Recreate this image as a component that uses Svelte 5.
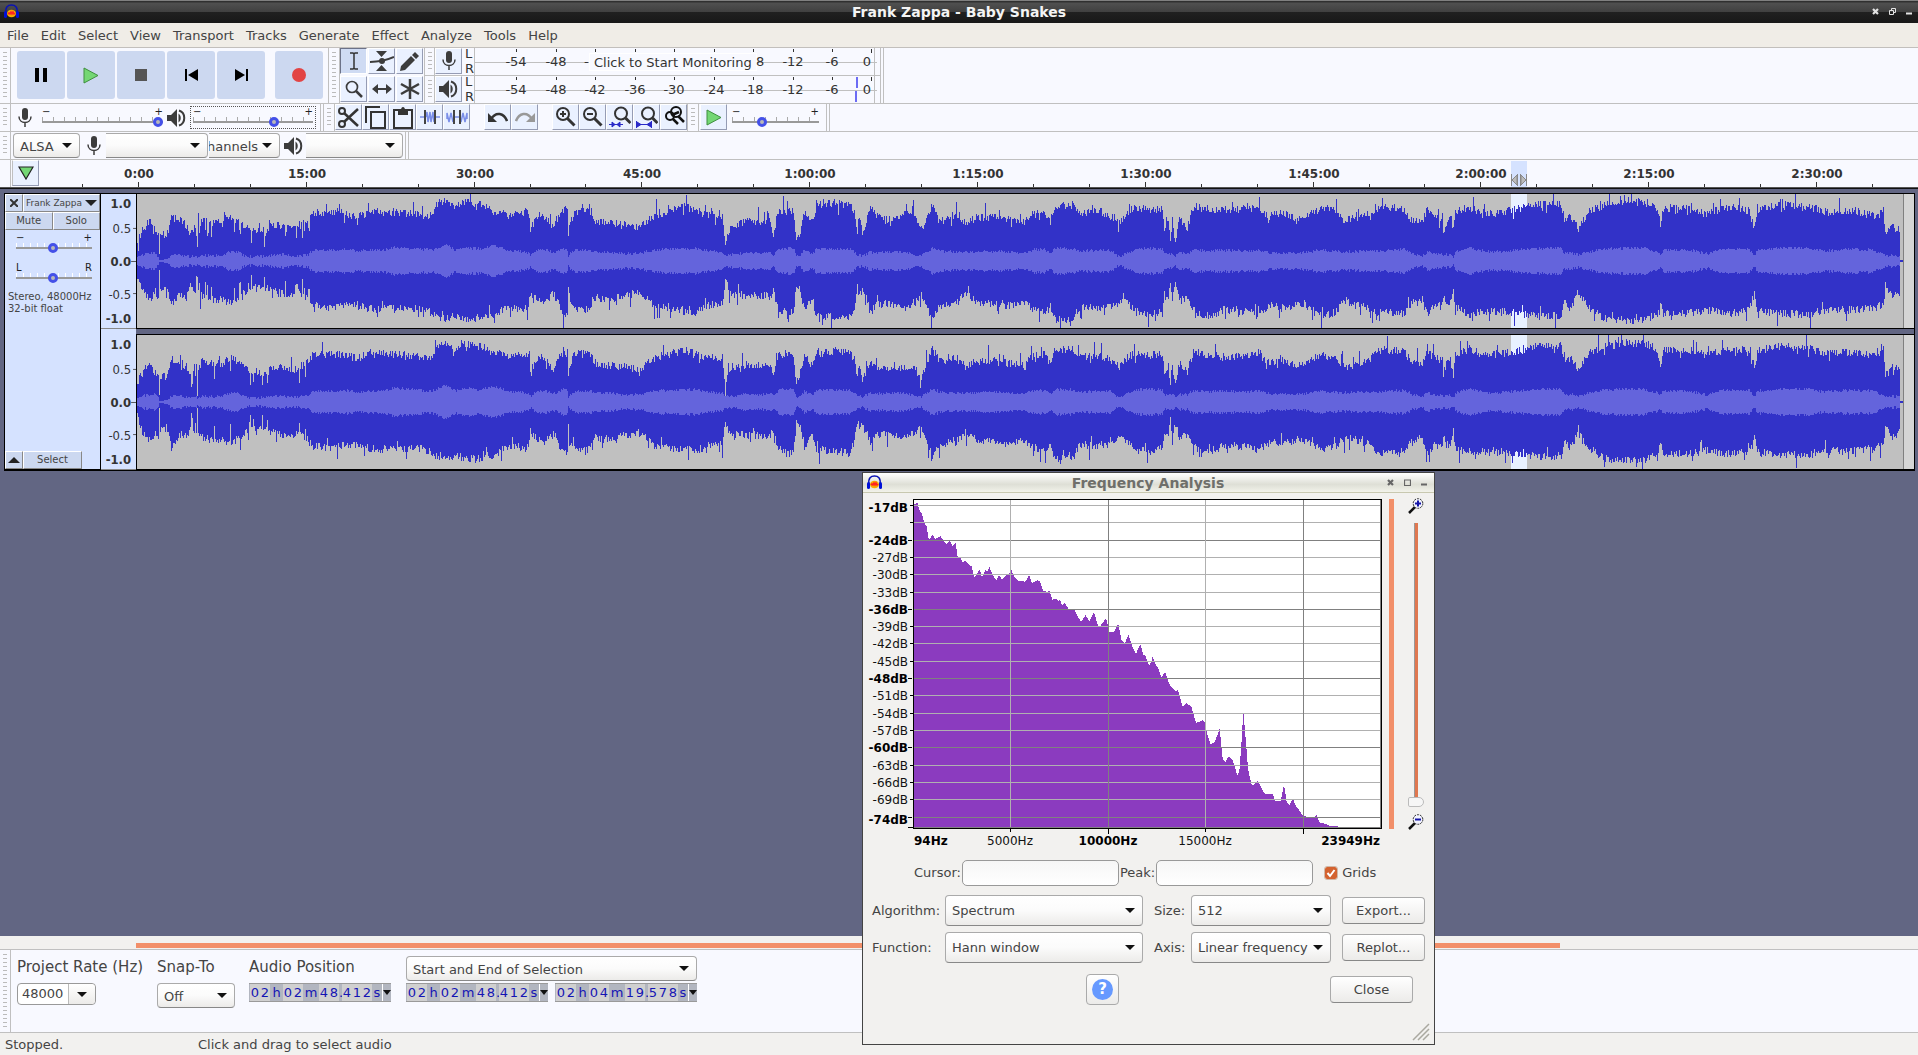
<script>
  const menus = ['File', 'Edit', 'Select', 'View', 'Transport', 'Tracks', 'Generate', 'Effect', 'Analyze', 'Tools', 'Help'];
  const rulerLabels = ['0:00', '15:00', '30:00', '45:00', '1:00:00', '1:15:00', '1:30:00', '1:45:00', '2:00:00', '2:15:00', '2:30:00'];
  const step = 167.8;
  const minorTicks = Array.from({ length: 33 }, (_, i) => 139 + ((i - 1) * step) / 3);
  const meterMarks = [-54, -48, -42, -36, -30, -24, -18, -12, -6].map((v, i) => ({ v, x: Math.round(517 + i * 39.5) }));

  // Envelope keyframes: x, peak above centre, peak below centre, rms.
  const envelope = [
    [137, 20, 15, 4], [142, 31, 30, 6], [150, 41, 39, 8], [155, 28, 30, 8], [158, 26, 40, 4], [159, 10, 8, 1], [160, 26, 26, 1], [167, 26, 26, 2],
    [171, 44, 45, 6], [178, 41, 34, 6], [186, 36, 35, 5], [190, 25, 26, 4], [196, 39, 30, 5], [197, 10, 13, 3], [198, 36, 30, 5],
    [203, 42, 35, 6], [212, 38, 38, 5], [222, 38, 38, 6], [230, 45, 42, 9], [238, 40, 37, 9], [245, 34, 30, 5], [255, 31, 27, 4],
    [265, 27, 28, 5], [270, 34, 30, 5], [280, 36, 32, 7], [290, 34, 33, 5], [300, 35, 32, 5], [307, 42, 38, 6], [313, 48, 44, 11],
    [330, 49, 47, 11], [345, 48, 44, 12], [357, 44, 44, 10], [370, 50, 48, 11], [385, 49, 48, 11], [394, 49, 48, 14], [420, 46, 47, 12],
    [432, 46, 52, 11], [436, 58, 55, 13], [445, 60, 58, 17], [455, 52, 54, 11], [463, 60, 58, 14], [480, 56, 57, 12], [487, 55, 56, 14],
    [492, 50, 55, 16], [500, 50, 50, 14], [508, 46, 45, 10], [520, 49, 48, 10], [528, 49, 45, 8], [530, 32, 32, 6], [538, 46, 39, 11],
    [546, 44, 39, 11], [553, 33, 33, 8], [563, 52, 52, 13], [567, 50, 52, 11], [568, 28, 27, 5], [570, 38, 42, 8], [575, 50, 48, 11],
    [590, 50, 48, 11], [594, 39, 37, 9], [610, 38, 39, 9], [625, 36, 34, 7], [640, 34, 32, 8], [655, 46, 46, 11], [670, 50, 48, 12],
    [685, 54, 49, 12], [695, 51, 52, 13], [708, 46, 44, 10], [722, 46, 43, 9], [725, 17, 19, 5], [730, 34, 34, 6], [745, 39, 34, 8],
    [760, 39, 35, 7], [770, 39, 35, 9], [773, 26, 29, 6], [778, 50, 50, 12], [793, 50, 52, 13], [796, 20, 22, 5], [800, 30, 28, 6],
    [804, 48, 47, 11], [812, 38, 36, 7], [816, 56, 55, 12], [835, 58, 56, 12], [850, 56, 57, 12], [854, 50, 47, 9], [857, 30, 26, 5],
    [859, 46, 36, 7], [862, 30, 27, 5], [866, 40, 37, 7], [870, 54, 52, 9], [877, 44, 42, 8], [890, 41, 44, 9], [905, 48, 47, 9],
    [915, 44, 42, 6], [921, 32, 34, 5], [926, 44, 44, 9], [932, 56, 58, 13], [940, 44, 44, 10], [955, 46, 44, 9], [965, 38, 32, 9],
    [975, 43, 40, 9], [995, 44, 43, 10], [1010, 41, 44, 9], [1025, 38, 40, 8], [1033, 48, 48, 11], [1045, 50, 52, 12], [1051, 41, 46, 8],
    [1056, 56, 59, 13], [1073, 56, 60, 12], [1080, 48, 46, 10], [1100, 50, 47, 11], [1110, 46, 46, 11], [1120, 38, 39, 4], [1128, 48, 42, 8],
    [1137, 54, 50, 12], [1150, 51, 55, 13], [1163, 53, 49, 12], [1165, 34, 34, 7], [1169, 40, 40, 8], [1171, 20, 20, 7], [1173, 40, 38, 8],
    [1176, 21, 22, 5], [1180, 42, 40, 8], [1188, 34, 36, 7], [1192, 48, 47, 10], [1197, 55, 51, 11], [1210, 52, 55, 10], [1225, 50, 49, 11],
    [1245, 52, 50, 10], [1260, 53, 54, 11], [1270, 44, 44, 8], [1282, 49, 47, 8], [1297, 41, 44, 8], [1310, 48, 46, 9], [1320, 53, 54, 11],
    [1335, 51, 52, 10], [1345, 41, 40, 9], [1360, 43, 44, 10], [1378, 53, 51, 10], [1395, 53, 52, 11], [1405, 52, 52, 12], [1412, 41, 42, 8],
    [1422, 38, 34, 5], [1428, 52, 52, 9], [1436, 44, 44, 7], [1443, 44, 44, 7], [1444, 29, 34, 6], [1450, 46, 45, 7], [1454, 28, 30, 4],
    [1456, 49, 46, 9], [1470, 54, 54, 13], [1480, 50, 51, 11], [1490, 47, 51, 9], [1505, 50, 51, 10], [1515, 51, 51, 11], [1530, 55, 54, 12],
    [1545, 57, 56, 13], [1562, 57, 54, 13], [1565, 40, 42, 7], [1572, 44, 44, 8], [1579, 33, 32, 6], [1590, 50, 47, 9], [1605, 56, 57, 12],
    [1625, 60, 59, 13], [1645, 59, 59, 13], [1658, 53, 52, 9], [1661, 37, 41, 7], [1664, 53, 52, 11], [1690, 52, 52, 11], [1708, 47, 49, 7],
    [1722, 52, 52, 12], [1735, 53, 52, 12], [1750, 50, 49, 12], [1755, 33, 32, 5], [1758, 51, 51, 11], [1780, 56, 52, 13], [1810, 54, 54, 13],
    [1825, 49, 49, 10], [1850, 50, 49, 12], [1875, 47, 47, 11], [1880, 47, 44, 8], [1884, 54, 44, 8], [1886, 27, 25, 5], [1893, 34, 35, 6],
    [1900, 33, 32, 5], [1901, 18, 20, 3],
  ];
  const second = [[137, 1], [300, 0.98], [480, 0.98], [815, 0.95], [818, 0.86], [850, 0.9], [858, 0.78], [921, 0.74], [930, 0.93], [1050, 0.95], [1180, 0.9], [1370, 0.87], [1378, 0.98], [1901, 1]];

  function at(keys, x) {
    let i = 0;
    while (i < keys.length - 2 && keys[i + 1][0] <= x) i++;
    const a = keys[i], b = keys[i + 1];
    const t = (x - a[0]) / (b[0] - a[0]);
    return a.slice(1).map((v, k) => v + (b[k + 1] - v) * t);
  }
  function noise(seed) {
    let s = seed;
    return () => {
      s = (s * 1664525 + 1013904223) % 4294967296;
      return s / 4294967296;
    };
  }
  function wave(seed, scale) {
    const rnd = noise(seed);
    let peak = '', rms = '';
    for (let x = 137; x < 1901; x++) {
      const [u, d, r] = at(envelope, x);
      const k = scale ? at(scale, x)[0] : 1;
      const early = x < 310 && x > 186;
      const dip = early && rnd() > 0.88 ? 12 : 0;
      const j = () => (rnd() - 0.5) * 8 - dip + (rnd() > 0.93 ? rnd() * 13 : 0) - (rnd() > 0.96 ? rnd() * 9 : 0);
      const top = Math.max(6, Math.min(67, Math.round(u * k + j())));
      const bot = Math.max(6, Math.min(67, Math.round(d * k + j())));
      const body = Math.max(1, Math.round(r + (rnd() - 0.5) * (r > 3 ? 3 : 0)));
      peak += `M${x - 137} ${67 - top}v${top + bot}h1v${-top - bot}z`;
      rms += `M${x - 137} ${67 - body}v${2 * body}h1v${-2 * body}z`;
    }
    return { peak, rms };
  }
  const channels = [wave(7), wave(91, second)];
  const scaleMarks = [['1.0', 12, 1], ['0.5', 38, 0], ['0.0', 72, 1], ['-0.5', 106, 0], ['-1.0', 131, 1]];

  const dbLines = [505, 522, 540, 557, 574, 592, 609, 626, 643, 661, 678, 695, 713, 730, 747, 765, 782, 799, 817];
  const dbLabels = [-17, null, -24, -27, -30, -33, -36, -39, -42, -45, -48, -51, -54, -57, -60, -63, -66, -69, -74];
  const majorDb = [-17, -24, -36, -48, -60, -74];
  const hzLabels = [['94Hz', 914, 'start', 1], ['5000Hz', 1010, 'middle', 0], ['10000Hz', 1108, 'middle', 1], ['15000Hz', 1205, 'middle', 0], ['23949Hz', 1380, 'end', 1]];
  const spectrumPoints = '162,1087 162,118 168,116 172,111 177,134 186,146 192,172 200,184 205,218 210,223 218,208 226,222 236,216 242,214 250,226 260,238 270,228 278,243 287,234 293,275 300,275 308,292 316,286 326,298 335,304 343,337 350,328 359,313 366,338 376,316 382,320 388,306 398,330 409,346 417,330 426,343 440,330 449,325 454,312 460,330 474,348 496,350 508,330 516,355 532,345 540,350 549,378 562,380 568,375 577,404 588,402 596,408 600,404 606,422 614,414 628,436 642,430 656,460 664,470 677,450 688,470 702,441 714,482 722,482 738,459 748,500 762,500 775,477 784,524 794,535 806,510 818,548 828,566 841,538 850,570 856,572 868,602 874,590 878,573 886,597 896,612 904,637 915,621 930,662 945,678 954,676 968,726 978,714 994,724 1008,774 1028,766 1034,772 1042,810 1052,837 1064,832 1079,792 1088,880 1096,892 1106,874 1118,884 1132,932 1138,920 1144,840 1150,738 1157,820 1164,910 1174,958 1182,960 1192,948 1200,960 1214,986 1238,986 1246,1008 1262,1008 1272,960 1280,1010 1288,1020 1299,1000 1306,1020 1330,1054 1362,1056 1370,1050 1378,1072 1394,1076 1414,1084 1432,1084 1444,1087';

  let gain = $state(100);
  let output = $state(69);
  let speed = $state(33);
  let trackGain = $state(49);
  let pan = $state(49);
  let zoom = $state(0);
  let grids = $state(true);
  const times = { position: '02h02m48.412s', start: '02h02m48.412s', end: '02h04m19.578s' };
  const cellClass = (c) => (/\d/.test(c) ? 'digit' : c === '.' ? 'dot' : c);
</script>

{#snippet logo()}
  <svg width="17" height="16" viewBox="0 0 17 16" aria-hidden="true">
    <path d="M3 9C2 3 5 1 8.500 1s6.500 2 5.500 8" fill="none" stroke="#0a12b4" stroke-width="1.500" />
    <ellipse cx="8.500" cy="9.500" rx="4.500" ry="3.800" fill="#f7b000" />
    <path d="M5 10l1-1 1 1 1-2 1 2 1-2 1 2 1-1" fill="none" stroke="#f22" stroke-width="1.600" />
    <rect x="1" y="7" width="3" height="7" rx="1.500" fill="#0010d8" />
    <rect x="13" y="7" width="3" height="7" rx="1.500" fill="#0010d8" />
  </svg>
{/snippet}

{#snippet mic()}
  <svg width="16" height="20" viewBox="0 0 16 20" aria-hidden="true">
    <rect x="5" y="0" width="6" height="12" rx="3" fill="#3c3c3c" />
    <path d="M2 8.500c0 8 12 8 12 0M8 14v5" fill="none" stroke="#3c3c3c" stroke-width="1.500" />
  </svg>
{/snippet}

{#snippet speaker()}
  <svg width="19" height="18" viewBox="0 0 19 18" aria-hidden="true">
    <path d="M0 6h4l6-6v18l-6-6H0z" fill="#3c3c3c" />
    <path d="M11.500 4.500v9c3-2 3-7 0-9z" fill="#3c3c3c" />
    <path d="M12 1.500c7 2 7 13 0 15" fill="none" stroke="#3c3c3c" stroke-width="2" />
  </svg>
{/snippet}

{#snippet play()}
  <svg width="16" height="17" viewBox="0 0 16 17" aria-hidden="true"><path d="M1 1l14 7.500L1 16z" fill="#74d774" stroke="#3f8f3f" /></svg>
{/snippet}

{#snippet grab()}<span class="grab"><i></i></span>{/snippet}

{#snippet slider(label, a, b, get, set)}
  <span class="slider">
    <span class="ends"><b>{a}</b><b>{b}</b></span>
    <input type="range" aria-label={label} value={get()} oninput={(e) => set(+e.currentTarget.value)} />
  </span>
{/snippet}

{#snippet combo(label, value, kind)}
  <span class="combo {kind}">
    <select aria-label={label}><option>{value}</option></select><i></i>
  </span>
{/snippet}

{#snippet lens(kind)}
  <svg width="22" height="22" viewBox="0 0 22 22" aria-hidden="true">
    <g fill="none" stroke="#333" stroke-width="2">
      {#if kind === 'fit' || kind === 'sel'}
        <circle cx="12" cy="7.500" r="6" /><path d="M16.500 12l5 5" stroke-width="3" />
      {:else if kind === 'toggle'}
        <g stroke="#111"><circle cx="7" cy="10" r="4" /><circle cx="13" cy="6" r="5" /><path d="M15 10l6 6M10 13l5 5M9 9l7-3" stroke-width="2.500" /></g>
      {:else}
        <circle cx="8" cy="8" r="6" /><path d="M12.500 12.500l7 7" stroke-width="3" /><path d="M5 8h6" />
        {#if kind === 'in'}<path d="M8 5v6" />{/if}
      {/if}
    </g>
    {#if kind === 'sel'}<path d="M0 18.500h14M3 16l3 2.500-3 2.500zM11 16l-3 2.500 3 2.500z" fill="#2a2ac8" stroke="#2a2ac8" />{/if}
    {#if kind === 'fit'}<path d="M0 18.500h15M.5 15v7M15.500 15v7M1 16l4 2.500-4 2.500zM15 16l-4 2.500 4 2.500z" fill="#2a2ac8" stroke="#2a2ac8" />{/if}
  </svg>
{/snippet}

{#snippet timeField(label, value)}
  <span class="time" role="group" aria-label={label}>
    {#each value as c}<span class={cellClass(c)}>{c}</span>{/each}
    <button aria-label="{label} format"><i></i></button>
  </span>
{/snippet}

{#snippet dialogLens(plus)}
  <svg width="16" height="16" viewBox="0 0 16 16" aria-hidden="true">
    <path d="M1 15l6-6" stroke="#111" stroke-width="2.500" /><circle cx="10" cy="5.500" r="4.800" fill="#f2f3ff" stroke="#222" stroke-dasharray="2 1" />
    <path d={plus ? 'M7 5.500h6M10 2.500v6' : 'M7 5.500h6'} stroke="#1414a8" stroke-width="2" />
  </svg>
{/snippet}

<div class="app">
  <header class="titlebar">
    {@render logo()}
    <h1>Frank Zappa - Baby Snakes</h1>
    <div class="controls">
      <button aria-label="Close window"><svg width="7" height="7" viewBox="0 0 7 7"><path d="M1 1l5 5M6 1L1 6" stroke="#e4e4e4" stroke-width="2.200" /></svg></button>
      <button aria-label="Restore window"><svg width="7" height="7" viewBox="0 0 7 7"><path d="M2.500 3V.5h4v4H4M.5 2.500h4v4h-4z" fill="none" stroke="#e4e4e4" /></svg></button>
      <button aria-label="Minimise window"><svg width="7" height="7" viewBox="0 0 7 7"><path d="M0 5.500h6" stroke="#e4e4e4" stroke-width="2" /></svg></button>
    </div>
  </header>

  <nav class="menubar">
    {#each menus as m}<button>{m}</button>{/each}
  </nav>

  <div class="toolrow tall">
    {@render grab()}
    <div class="transport">
      <button aria-label="Pause"><svg width="12" height="14"><path d="M0 0h4v14H0zM8 0h4v14H8z" /></svg></button>
      <button aria-label="Play">{@render play()}</button>
      <button aria-label="Stop"><svg width="12" height="12"><path d="M0 0h12v12H0z" fill="#555" /></svg></button>
      <button aria-label="Skip to start"><svg width="13" height="12"><path d="M0 0h2v12H0zM13 0v12L3 6z" /></svg></button>
      <button aria-label="Skip to end"><svg width="13" height="12"><path d="M11 0h2v12h-2zM0 0v12l10-6z" /></svg></button>
      <button aria-label="Record" class="record"><svg width="14" height="14"><circle cx="7" cy="7" r="7" fill="#e24444" /></svg></button>
    </div>
    {@render grab()}
    <div class="tools">
      <button class="tb on" aria-label="Selection tool"><svg width="10" height="18" viewBox="0 0 10 18"><path d="M1 1h3l1 1 1-1h3M5 2v14M1 17h3l1-1 1 1h3" fill="none" stroke="#333" stroke-width="1.500" /></svg></button>
      <button class="tb" aria-label="Envelope tool"><svg width="24" height="20" viewBox="0 0 24 20"><path d="M6 0h11l-5.500 6zM6 20h11l-5.500-6z" fill="#3c3c3c" /><path d="M0 11c10 0 15-1 24-5" fill="none" stroke="#3c3c3c" stroke-width="2" /><circle cx="12" cy="10" r="3" fill="#3c3c3c" /></svg></button>
      <button class="tb" aria-label="Draw tool"><svg width="19" height="19" viewBox="0 0 19 19"><path d="M0 19l1-5L11 4l4 4L5 18zM12 3l3-3 4 4-3 3z" fill="#3c3c3c" /></svg></button>
      <button class="tb" aria-label="Zoom tool"><svg width="18" height="18" viewBox="0 0 18 18"><circle cx="7" cy="7" r="5.500" fill="none" stroke="#3c3c3c" stroke-width="1.700" /><path d="M11 11l6 6" stroke="#3c3c3c" stroke-width="2.500" /></svg></button>
      <button class="tb" aria-label="Time shift tool"><svg width="20" height="12" viewBox="0 0 20 12"><path d="M0 6l6-5v4h8V1l6 5-6 5V7H6v4z" fill="#3c3c3c" /></svg></button>
      <button class="tb" aria-label="Multi tool"><svg width="20" height="20" viewBox="0 0 20 20"><path d="M10 0v20M1 5l18 10M19 5L1 15" stroke="#3c3c3c" stroke-width="2.500" /></svg></button>
    </div>
    <div class="meters">
      {#each [0, 1] as row}
        <div class="meter">
          {@render grab()}
          <button class="tb" aria-label={row ? 'Playback meter' : 'Recording meter'}>{#if row}{@render speaker()}{:else}{@render mic()}{/if}</button>
          <svg width="418" height="27" viewBox="463 48 418 27">
            <g class="lr"><text x="466" y="58">L</text><text x="466" y="73">R</text></g>
            <path d="M475.500 48v27M475 62.500h403M875.500 48v27" stroke="#c0c0c0" fill="none" />
            {#each meterMarks as m}
              <path d="M{m.x + 0.5} 49v3" stroke="#333" />
              {#if row || m.v < -42 || m.v > -18}<text x={m.x} y="66" text-anchor="middle">{m.v}</text>{/if}
            {/each}
            <path d="M872.500 49v4" stroke="#333" /><text x="868" y="66" text-anchor="middle">0</text>
            {#if row}<path d="M858 49v11M857 63v11" stroke="#6c6cf4" stroke-width="2" />{:else}
              <rect x="590.500" y="53.500" width="167" height="17" fill="#f8f9ff" stroke="#fff" />
              <text x="585" y="66">-</text><text x="595" y="67">Click to Start Monitoring</text><text x="757" y="66">8</text>{/if}
          </svg>
        </div>
      {/each}
    </div>
    <span class="end"></span>
  </div>

  <div class="toolrow">
    {@render grab()}
    <div class="mixer">
      {@render mic()}
      {@render slider('Recording volume', '−', '+', () => gain, (v) => (gain = v))}
      {@render speaker()}
      <span class="focus">{@render slider('Playback volume', '−', '+', () => output, (v) => (output = v))}</span>
    </div>
    <span class="end"></span>
    {@render grab()}
    <div class="edit">
      <button class="tb" aria-label="Cut"><svg width="22" height="21" viewBox="0 0 22 21"><g fill="none" stroke="#333" stroke-width="2"><circle cx="4" cy="4" r="3" /><circle cx="4" cy="17" r="3" /><path d="M6 6l14 13M6 15L20 2" stroke-width="2.500" /></g></svg></button>
      <button class="tb" aria-label="Copy"><svg width="22" height="23" viewBox="0 0 22 23"><path d="M1 17V1h14M6 6h14v16H6z" fill="none" stroke="#333" stroke-width="2" /></svg></button>
      <button class="tb" aria-label="Paste"><svg width="20" height="23" viewBox="0 0 20 23"><path d="M1 4h18v18H1z" fill="none" stroke="#333" stroke-width="2" /><path d="M5 4h3c0-4 4-4 4 0h3v5H5z" fill="#333" /></svg></button>
      <button class="tb" aria-label="Trim"><svg width="20" height="16" viewBox="0 0 20 16"><path d="M0 8h4M16 8h4M6 8l1-5 1 10 2-10 1 10 2-10 1 10" fill="none" stroke="#7b8fe8" stroke-width="1.500" /><path d="M5 1v14M15 1v14" stroke="#444" stroke-width="2" /></svg></button>
      <button class="tb" aria-label="Silence"><svg width="22" height="16" viewBox="0 0 22 16"><path d="M1 10V4l2 9 2-9 2 9M8 8h6M15 13l2-9 2 9 2-9v6" fill="none" stroke="#7b8fe8" stroke-width="1.500" /><path d="M8 1v14M14 1v14" stroke="#444" stroke-width="2" /></svg></button>
      <button class="tb gap" aria-label="Undo"><svg width="20" height="12" viewBox="0 0 20 12"><path d="M3 8c5-8 13-6 16 2" fill="none" stroke="#333" stroke-width="2.500" /><path d="M0 2v9h9z" fill="#333" /></svg></button>
      <button class="tb" aria-label="Redo"><svg width="20" height="12" viewBox="0 0 20 12"><path d="M17 8C12 0 4 2 1 10" fill="none" stroke="#999" stroke-width="2.500" /><path d="M20 2v9h-9z" fill="#999" /></svg></button>
      <button class="tb gap" aria-label="Zoom in">{@render lens('in')}</button>
      <button class="tb" aria-label="Zoom out">{@render lens('out')}</button>
      <button class="tb" aria-label="Fit selection">{@render lens('sel')}</button>
      <button class="tb" aria-label="Fit project">{@render lens('fit')}</button>
      <button class="tb" aria-label="Zoom toggle">{@render lens('toggle')}</button>
    </div>
    {@render grab()}
    <div class="speed">
      <button class="tb" aria-label="Play at speed">{@render play()}</button>
      {@render slider('Playback speed', '−', '+', () => speed, (v) => (speed = v))}
    </div>
    <span class="end"></span>
  </div>

  <div class="toolrow devices">
    {@render grab()}
    {@render combo('Audio host', 'ALSA', 'host')}
    {@render mic()}
    {@render combo('Recording device', '', 'input flat')}
    {@render combo('Recording channels', 'hannels', 'chans flat')}
    {@render speaker()}
    {@render combo('Playback device', '', 'output flat')}
    <span class="end"></span>
  </div>

  <div class="toolrow timeline">
    <span class="grab"></span>
    <button class="tb pin" aria-label="Pinned play head"><svg width="16" height="14" viewBox="0 0 16 14"><path d="M1 1h14L8 13z" fill="#74d774" stroke="#222" stroke-width="1.200" /></svg></button>
    <svg class="ruler" height="27" aria-label="Timeline">
      <g transform="translate(-40 0)">
        <rect x="1511" y="1" width="16" height="26" fill="#d5e2ff" />
        <path d="M1511.500 14v12M1526.500 14v12M1517.500 14v12M1520.500 14v12" stroke="#888" />
        <path d="M1512 20l5-5v10zM1526 20l-5-5v10z" fill="#bbb" stroke="#888" />
        {#each minorTicks as x}<path d="M{Math.round(x) - 0.5} 24v3" stroke="#333" />{/each}
        {#each rulerLabels as t, i}
          <path d="M{Math.round(139 + i * step) - 0.5} 22v5" stroke="#333" />
          <text x={Math.round(139 + i * step)} y="18" text-anchor="middle">{t}</text>
        {/each}
      </g>
    </svg>
  </div>

  <main class="workspace">
    <section class="track" aria-label="Frank Zappa track">
      <div class="panel">
        <div class="prow">
          <button class="close" aria-label="Close track"><svg width="8" height="8" viewBox="0 0 8 8"><path d="M0 0l8 8M8 0L0 8" stroke="#333" stroke-width="2" /></svg></button>
          <button class="name">Frank Zappa <i></i></button>
        </div>
        <div class="prow"><button class="half">Mute</button><button class="half">Solo</button></div>
        {@render slider('Track gain', '−', '+', () => trackGain, (v) => (trackGain = v))}
        {@render slider('Track pan', 'L', 'R', () => pan, (v) => (pan = v))}
        <p>Stereo, 48000Hz<br />32-bit float</p>
        <div class="prow foot"><button class="close" aria-label="Collapse track"><i></i></button><button class="choose">Select</button></div>
      </div>
      <div class="channels">
        {#each channels as ch}
          <div class="channel">
            <svg class="vscale" width="36" height="134" viewBox="0 0 36 134">
              {#each scaleMarks as [t, y, bold]}<text x="31" {y} text-anchor="end" class:bold>{t}</text>{/each}
              <path d="M33 33.500h3M31 67.500h5M33 100.500h3" stroke="#555" />
            </svg>
            <svg class="wave" height="134" viewBox="0 0 1778 134" preserveAspectRatio="none" shape-rendering="crispEdges">
              <rect width="1767" height="134" fill="#c0c0c0" />
              <rect x="1375" width="16" height="134" fill="#e8f1ff" />
              <path d={ch.peak} fill="#3232c8" />
              <path d={ch.rms} fill="#6464dc" />
              <path d="M1764 66h3v2h-3z" fill="#3232c8" />
              <path d="M1767 0h1v134h-1z" fill="#808080" />
              <path d="M1768 0h10v134h-10z" fill="#d5d5d5" />
            </svg>
          </div>
        {/each}
      </div>
    </section>
  </main>

  <div class="hscroll"><span></span></div>

  <footer class="selection">
    {@render grab()}
    <div class="field rate">
      <label for="rate">Project Rate (Hz)</label>
      <span class="editbox"><input id="rate" value="48000" /><button aria-label="Choose rate"><i></i></button></span>
    </div>
    <div class="field snap"><span class="cap">Snap-To</span>{@render combo('Snap-To', 'Off', 'off')}</div>
    <div class="field pos"><span class="cap">Audio Position</span>{@render timeField('Audio Position', times.position)}</div>
    <div class="field range">
      {@render combo('Selection mode', 'Start and End of Selection', 'mode')}
      <span class="pair">{@render timeField('Selection start', times.start)}{@render timeField('Selection end', times.end)}</span>
    </div>
  </footer>
  <div class="status"><span>Stopped.</span><span>Click and drag to select audio</span></div>

  <div class="dialog" role="dialog" aria-labelledby="dlg-title">
    <div class="dtitle">
      {@render logo()}
      <h2 id="dlg-title">Frequency Analysis</h2>
      <div class="controls">
        <button aria-label="Close"><svg width="7" height="7" viewBox="0 0 7 7"><path d="M1 1l5 5M6 1L1 6" stroke="#666" stroke-width="2.200" /></svg></button>
        <button aria-label="Maximise"><svg width="7" height="7" viewBox="0 0 7 7"><path d="M.5 1h6v5.500h-6z" fill="none" stroke="#666" stroke-width="1.200" /></svg></button>
        <button aria-label="Minimise"><svg width="7" height="7" viewBox="0 0 7 7"><path d="M0 5.500h6" stroke="#666" stroke-width="2" /></svg></button>
      </div>
    </div>
    <div class="plotrow">
      <svg class="plot" width="520" height="354" viewBox="864 495 520 354" aria-label="Spectrum plot">
        <rect x="913" y="499" width="469" height="330" fill="#fff" />
        <g transform="translate(860 465) scale(.33333)"><polygon points={spectrumPoints} fill="#8b3bbf" shape-rendering="crispEdges" /></g>
        {#if grids}
          {#each dbLines as y, i}<path d="M914 {y + 0.5}h467" stroke={majorDb.includes(dbLabels[i]) && i ? '#808080' : '#b0b0b0'} />{/each}
          <path d="M1010.500 500v328M1205.500 500v328" stroke="#b0b0b0" />
          <path d="M1108.500 500v328M1303.500 500v328M1380.500 500v328M914 827.500h467" stroke="#808080" />
        {/if}
        <rect x="913.500" y="499.500" width="468" height="329" fill="none" stroke="#000" />
        {#each dbLines as y, i}
          <path d="M{majorDb.includes(dbLabels[i]) && i ? 908 : 910} {y + 0.5}h4" stroke="#000" />
          {#if dbLabels[i]}<text x="908" y={i === 0 || i === 18 ? y + 7 : y + 5} text-anchor="end" class:bold={majorDb.includes(dbLabels[i])}>{dbLabels[i]}dB</text>{/if}
        {/each}
        <path d="M908 827.500h5M1010.500 829v3M1108.500 829v5M1205.500 829v3M1303.500 829v5" stroke="#000" />
        {#each hzLabels as [t, x, anchor, bold]}<text {x} y="845" text-anchor={anchor} class:bold>{t}</text>{/each}
      </svg>
      <span class="vbar"></span>
      <div class="vzoom">
        {@render dialogLens(true)}
        <input type="range" aria-label="Vertical zoom" bind:value={zoom} />
        {@render dialogLens(false)}
      </div>
    </div>
    <div class="readout">
      <label for="cursor">Cursor:</label><input id="cursor" readonly />
      <label for="peak">Peak:</label><input id="peak" readonly />
      <label class="check"><input type="checkbox" bind:checked={grids} /><svg width="12" height="12" viewBox="0 0 12 12"><path d="M2.500 6l2.500 3 4.500-6" fill="none" stroke="#fff" stroke-width="2" /></svg>Grids</label>
    </div>
    <div class="form">
      <span>Algorithm:</span>{@render combo('Algorithm', 'Spectrum', 'big')}<span class="c3">Size:</span>{@render combo('Size', '512', 'big')}<button class="push">Export...</button>
      <span>Function:</span>{@render combo('Function', 'Hann window', 'big')}<span class="c3">Axis:</span>{@render combo('Axis', 'Linear frequency', 'big')}<button class="push">Replot...</button>
    </div>
    <div class="actions">
      <button class="help" aria-label="Help"><b>?</b></button>
      <button class="push">Close</button>
    </div>
    <svg class="grip" width="18" height="18" viewBox="0 0 18 18" aria-hidden="true"><path d="M1 17L17 1M6 17L17 6M11 17l6-6" stroke="#aaa9a0" stroke-width="1.500" /></svg>
  </div>
</div>

<style>
  :global(body) { margin: 0; }
  .app { position: relative; display: flex; flex-direction: column; min-height: 100vh; overflow: hidden; box-sizing: border-box; background: #f2f1ef; color: #444; font: 13px/16px "DejaVu Sans", sans-serif; }
  .app :global(*) { box-sizing: border-box; }
  button, input, select { font: inherit; color: inherit; margin: 0; padding: 0; border: 0; background: none; }
  svg { display: block; flex: none; }
  h1, h2, p { margin: 0; }

  .titlebar { display: flex; align-items: center; height: 23px; padding: 0 5px 0 3px; color: #f4f4f4; background: linear-gradient(#808080 0 1px, #303030 1px 2px, #505050 3px, #404040 12px, #202020 12px, #181818); }
  .titlebar h1, .dtitle h2 { flex: 1; padding-left: 26px; text-align: center; font-size: 14px; line-height: 20px; }
  .controls { display: flex; gap: 10px; }
  .controls button { width: 7px; height: 7px; }
  .menubar { display: flex; gap: 12px; height: 25px; padding: 1px 7px 0; background: #f0ede7; border-bottom: 1px solid #c2bfbc; }

  .toolrow { display: flex; height: 28px; background: #f8f9ff; border-bottom: 1px solid #c0c0c0; }
  .toolrow.tall { height: 56px; }
  .grab { flex: none; display: flex; justify-content: center; width: 11px; padding: 4px 0; border-right: 1px solid #c0c0c0; }
  .grab i { width: 4px; background: repeating-linear-gradient(#bbb 0 1px, transparent 1px 4px); }
  .end { flex: none; width: 4px; border: solid #c0c0c0; border-width: 0 1px; }
  .tb { flex: none; display: grid; place-items: center; width: 27px; height: 26px; background: #eaf1ff; border: 1px solid #fff; border-right-color: #959cb4; border-bottom-color: #959cb4; overflow: hidden; }
  .tb.on { background: #cfdbf3; border-color: #6c7288 #fff #fff #6c7288; }
  .transport { display: flex; gap: 2px; padding: 3px 5px 0 6px; border-right: 1px solid #c0c0c0; }
  .transport button { display: grid; place-items: center; width: 48px; height: 48px; border-radius: 3px; background: #ccd8f0; }
  .transport .record { margin-left: 8px; }
  .tools { display: grid; grid-template-columns: repeat(3, 28px); grid-auto-rows: 28px; }
  .meter { display: flex; height: 28px; border-bottom: 1px solid #c0c0c0; }
  .meter .grab { width: 11px; border-left: 1px solid #c0c0c0; }
  .meter text { font-size: 13px; fill: #333; }
  .mixer { display: flex; align-items: center; gap: 2px; padding: 0 4px 0 6px; }
  .mixer .slider { width: 125px; margin-left: 5px; }
  .mixer .slider, .focus { align-self: stretch; }
  .focus { margin: 2px 0 2px 2px; border: 1px dotted #555; }
  .focus .slider { width: 124px; margin: -3px 0 0; }

  .slider { display: flex; flex-direction: column; flex: none; padding: 3px 2px 0; height: 27px; }
  .ends { display: flex; justify-content: space-between; font-size: 10px; line-height: 10px; }
  .ends b { font-weight: 400; color: #222; }
  .slider input { appearance: none; flex: none; width: 100%; height: 14px; margin-top: -4px; background: linear-gradient(#999, #999) 0 8px / 100% 2px no-repeat, repeating-linear-gradient(90deg, #aaa 0 1px, transparent 1px 11px) 0 4px / 100% 4px no-repeat; }
  .slider input::-webkit-slider-thumb { appearance: none; width: 10px; height: 10px; margin-top: 3px; border: 3px solid #4450e8; border-radius: 50%; background: #b8b8b8; }

  .edit { display: flex; border-right: 1px solid #c0c0c0; }
  .edit .gap { margin-left: 14px; }
  .speed { display: flex; padding: 0 5px 0 1px; }
  .speed .slider { width: 91px; margin-left: 3px; }

  .combo { display: grid; align-items: center; flex: none; }
  .combo select, .combo i { grid-area: 1 / 1; }
  .combo select { appearance: none; width: 100%; height: 100%; padding: 0 6px; border: 1px solid #aaa; border-bottom-color: #888; border-radius: 4px; background: linear-gradient(#fff, #fbfbfb 50%, #ecebe9); }
  .combo i, .time i, .editbox i, .name i { border: solid transparent; border-width: 5px 5px 0; border-top-color: #111; pointer-events: none; }
  .combo i { justify-self: end; margin-right: 8px; }
  .devices { align-items: center; }
  .devices .grab { align-self: stretch; }
  .devices .end { align-self: stretch; margin-left: 2px; }
  .devices select { padding-top: 3px; }
  .host { width: 67px; height: 25px; margin: 0 6px 0 2px; }
  .input { width: 102px; height: 25px; margin: 0 1px 0 4px; }
  .chans { width: 71px; height: 25px; margin-right: 4px; }
  .output { width: 97px; height: 25px; margin-left: 3px; }
  .flat select { border-left: 0; border-radius: 0 4px 4px 0; padding-left: 0; padding-right: 0; text-indent: -2px; }

  .timeline { border-bottom-color: #555; }
  .pin { margin-left: 1px; border-left-color: #c0c0c0; }
  .ruler { flex: 1; min-width: 0; margin-left: 1px; }
  .ruler text { font-size: 12px; font-weight: 700; fill: #333; }

  .workspace { flex: 1; padding: 4px 3px 0 4px; background: #626683; border-top: 1px solid #111; }
  .track { display: flex; height: 278px; border: 1px solid #000; border-bottom-width: 2px; }
  .panel { flex: none; display: flex; flex-direction: column; width: 96px; background: #d5e2ff; border-right: 1px solid #000; font-size: 10px; line-height: 12px; }
  .prow { display: flex; height: 18px; }
  .prow button { display: flex; align-items: center; justify-content: center; background: #ccd8f0; border: 1px solid #fff; border-right-color: #888; border-bottom-color: #888; }
  .prow .close { width: 18px; }
  .prow .name { flex: 1; gap: 3px; font-size: 9px; white-space: nowrap; }
  .name i { border-width: 6px 6px 0; border-top-color: #222; }
  .prow .half { flex: 1; }
  .panel .slider { width: 80px; height: 30px; margin-left: 9px; }
  .panel .slider input { background: linear-gradient(#999, #999) 0 8px / 100% 2px no-repeat, repeating-linear-gradient(90deg, #fff 0 1px, transparent 1px 7px) 0 4px / 100% 4px no-repeat; }
  .panel p { padding: 1px 3px; }
  .foot { margin-top: auto; }
  .foot i { border: solid transparent; border-width: 0 6px 6px; border-bottom-color: #222; }
  .choose { width: 59px; }
  .channels { flex: 1; min-width: 0; display: flex; flex-direction: column; gap: 7px; background: linear-gradient(90deg, #d5e2ff 35px, #626683 35px); }
  .channel { display: flex; height: 134px; }
  .vscale { background: #d5e2ff; border-right: 1px solid #888; box-shadow: 0 1px #888; }
  .vscale text { font-size: 12px; fill: #333; }
  .wave { flex: 1; min-width: 0; box-shadow: 0 0 0 1px #000; }
  text.bold { font-weight: 700; }

  .hscroll { height: 13px; padding-top: 7px; }
  .hscroll span { display: block; width: 74.25%; height: 5px; margin-left: 136px; background: #f28f69; }

  .selection { display: flex; height: 84px; background: #f8f9ff; border: solid #c0c0c0; border-width: 1px 0; }
  .field { display: flex; flex-direction: column; gap: 5px; margin-top: 6px; }
  .field label, .cap { height: 22px; line-height: 22px; font-size: 15px; white-space: nowrap; }
  .rate { width: 139px; padding-left: 6px; }
  .snap { width: 92px; padding-left: 7px; }
  .pos { width: 164px; padding-left: 7px; }
  .editbox { display: flex; width: 79px; height: 22px; border: 1px solid #999; border-radius: 4px; background: #fff; }
  .editbox input { width: 50px; padding-left: 4px; }
  .editbox button { flex: 1; display: grid; place-items: center; border-left: 1px solid #bbb; background: linear-gradient(#fff, #ecebe9); border-radius: 0 4px 4px 0; }
  .off { width: 78px; height: 25px; }
  .mode { width: 291px; height: 25px; }
  .mode select, .off select { padding-top: 2px; }
  .range { gap: 2px; }
  .time { display: flex; align-items: stretch; width: 142px; height: 19px; padding: 0 0 0 1px; border: solid #9a9a9a; border-width: 1px 0; background: #b2b6c0; color: #1414b4; line-height: 17px; text-align: center; }
  .digit { width: 10px; background: #d0d0d0; }
  .time .h { width: 13px; } .time .m { width: 16px; } .time .dot { width: 3px; } .time .s { width: 10px; }
  .time button { display: grid; place-items: center; width: 9px; border-left: 1px solid #fff; }
  .time i { border-width: 5px 4px 0; }
  .pair { display: flex; gap: 7px; }
  .status { display: flex; height: 22px; padding: 1px 0 0 5px; line-height: 22px; }
  .status span:first-child { width: 193px; }

  .dialog { position: absolute; left: 862px; top: 472px; width: 573px; height: 573px; display: flex; flex-direction: column; background: #f2f1ef; border: 1px solid #444; }
  .dtitle { display: flex; align-items: center; height: 20px; margin-bottom: 2px; padding: 0 6px 0 3px; background: linear-gradient(#fff, #dedfd6 60%, #f2f2ea); border-bottom: 1px solid #c8c8b0; color: #6f6f6a; }
  .plotrow { display: flex; padding-left: 1px; height: 354px; }
  .plot text { font-size: 12px; fill: #111; }
  .plot text.bold { fill: #000; }
  .vbar { width: 5px; height: 330px; margin: 4px 0 0 5px; background: #f28f69; }
  .vzoom { display: flex; flex-direction: column; align-items: center; gap: 7px; margin: 3px 0 0 14px; }
  .vzoom input { appearance: none; writing-mode: vertical-lr; direction: rtl; width: 16px; height: 286px; background: linear-gradient(90deg, #999 0 1px, #e07850 1px) 6px 2px / 4px 276px no-repeat; }
  .vzoom input::-webkit-slider-thumb { appearance: none; width: 16px; height: 10px; border: 1px solid #bbb; border-radius: 3px 8px 8px 3px; background: #f6f6f6; }
  .readout { display: flex; align-items: center; gap: 1px; margin: 11px 0 0 51px; height: 26px; }
  .readout > input { width: 157px; height: 26px; border: 1px solid #999; border-radius: 5px; background: linear-gradient(#f6f6f6, #fff); }
  .check { display: grid; grid-template-columns: 12px auto; align-items: center; gap: 5px; margin-left: 11px; }
  .check input { grid-area: 1 / 1; appearance: none; width: 12px; height: 12px; border-radius: 2px; background: #fff; outline: 1px solid #d0b8a8; }
  .check input:checked { background: #d4622f; }
  .check svg { grid-area: 1 / 1; pointer-events: none; }
  .form { display: grid; grid-template-columns: 73px 198px 48px 140px 94px; row-gap: 6px; align-items: center; margin: 9px 0 0 9px; }
  .form .c3 { margin-left: 11px; white-space: nowrap; }
  .big { height: 31px; }
  .form .push { justify-self: end; }
  .push { width: 83px; height: 27px; border: 1px solid #aaa; border-bottom-color: #888; border-radius: 4px; background: linear-gradient(#fff, #ecebe9); }
  .actions { display: flex; align-items: center; justify-content: flex-end; gap: 211px; margin: 11px 21px 0 0; height: 31px; }
  .help { display: grid; place-items: center; width: 33px; height: 31px; border: 1px solid #aaa; border-radius: 4px; background: linear-gradient(#fff, #ecebe9); }
  .help b { width: 21px; height: 21px; border-radius: 50%; background: #6699ff; color: #fff; font-size: 15px; line-height: 21px; }
  .grip { align-self: flex-end; margin: auto 4px 3px 0; }
</style>
